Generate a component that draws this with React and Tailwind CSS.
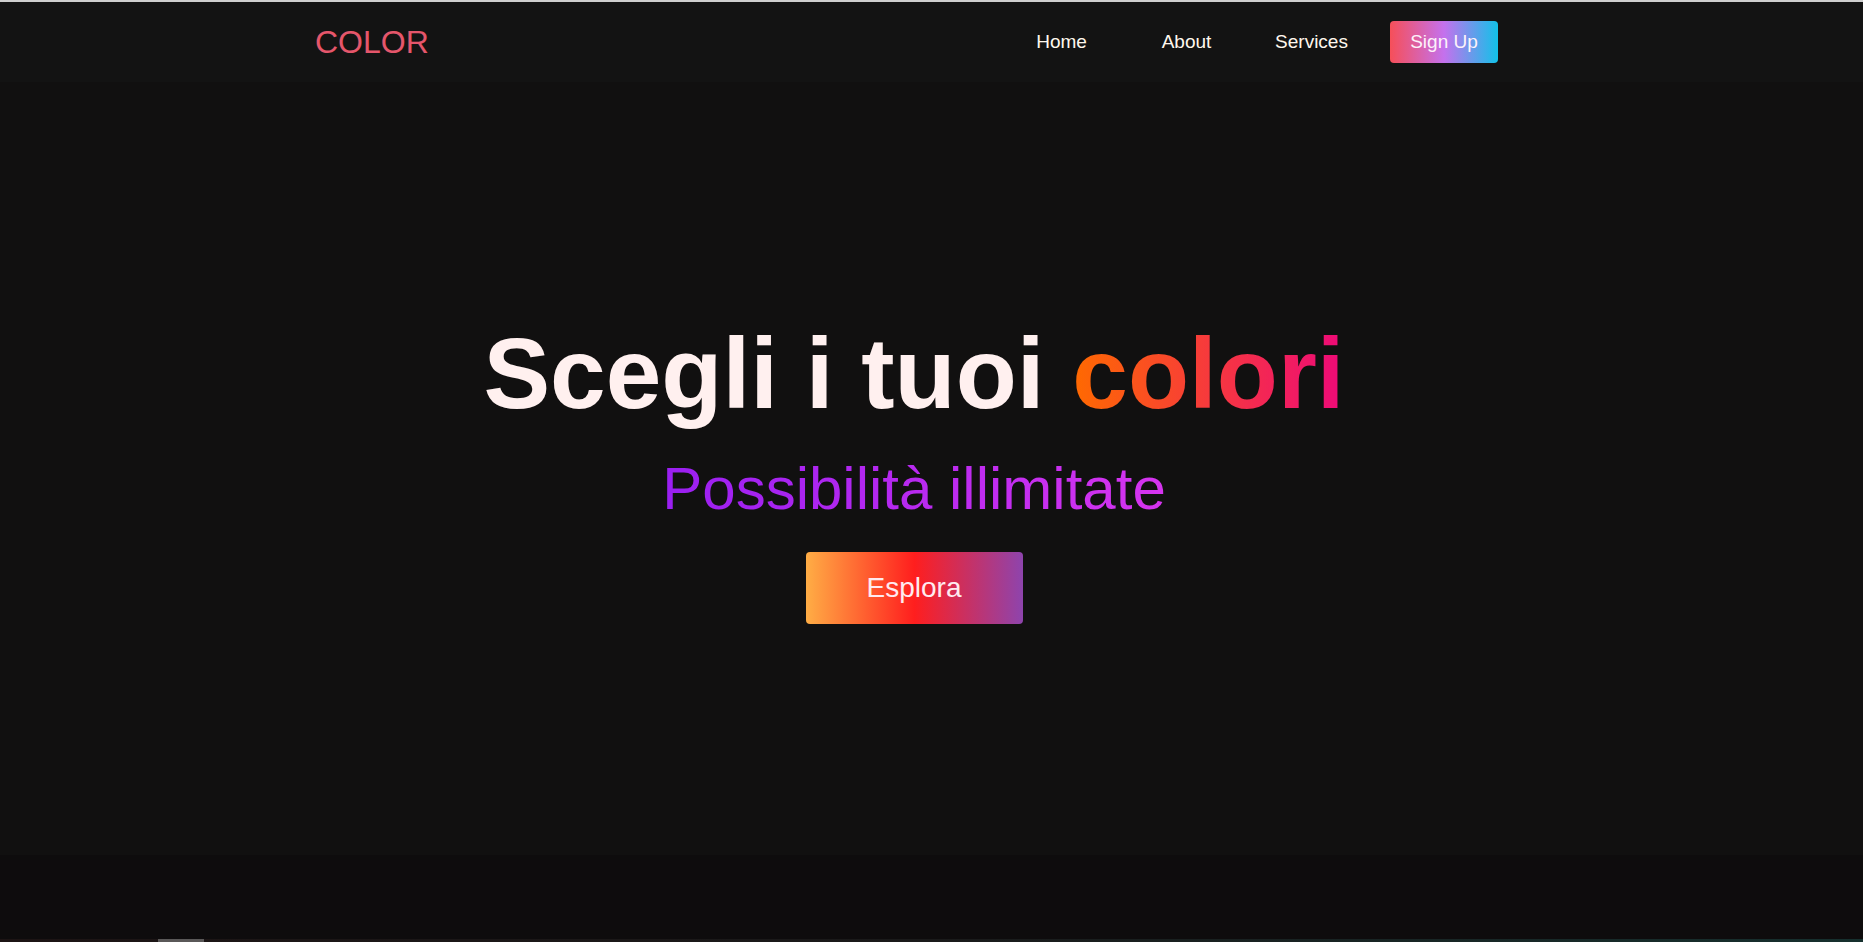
import React from 'react';

const links = ['Home', 'About', 'Services'];

function Navbar() {
  return (
    <nav className="h-[80px] bg-[#131313] flex items-center justify-between pl-[315px] pr-[365px]">
      <a href="#" className="text-[32px] leading-none text-[#e5566b]">
        COLOR
      </a>
      <div className="flex items-center">
        {links.map((label) => (
          <a key={label} href="#" className="w-[125px] text-center text-[19px] text-[#fff8ee]">
            {label}
          </a>
        ))}
        <button className="ml-[16px] w-[108px] h-[42px] rounded-[4px] text-[19px] text-[#fdf2fa] bg-[linear-gradient(90deg,#f64f59,#c471ed,#12c2e9)]">
          Sign Up
        </button>
      </div>
    </nav>
  );
}

function Hero() {
  return (
    <section className="h-[773px] bg-[#111010] flex flex-col items-center justify-center pt-[4px] pr-[35px]">
      <h1 className="text-[100px] leading-[112px] font-bold text-[#fff0ef] whitespace-nowrap">
        Scegli i tuoi{' '}
        <span className="bg-[linear-gradient(90deg,#ff6a00,#ee0979)] bg-clip-text text-transparent">
          colori
        </span>
      </h1>
      <p className="mt-[26px] text-[60px] leading-[67px] bg-[linear-gradient(90deg,#9a1ff1,#d634ef)] bg-clip-text text-transparent">
        Possibilità illimitate
      </p>
      <button className="mt-[30px] w-[217px] h-[72px] rounded-[4px] text-[28px] text-[#ffeaf0] bg-[linear-gradient(90deg,#ffad45,#ff1e1e_50%,#8e44ad)]">
        Esplora
      </button>
    </section>
  );
}

export default function App() {
  return (
    <div className="h-[942px] overflow-hidden bg-[#0e0c0d] font-['Liberation_Sans',Arial,sans-serif]">
      <div className="h-[2px] bg-[#cfcfcf]" />
      <Navbar />
      <Hero />
      <div className="h-[84px] bg-[#0e0c0d]" />
      <div className="h-[3px] flex bg-[linear-gradient(90deg,#1c1414,#1a1a1a_50%,#16302e)]">
        <div className="ml-[158px] w-[46px] bg-[#5a5858]" />
      </div>
    </div>
  );
}
